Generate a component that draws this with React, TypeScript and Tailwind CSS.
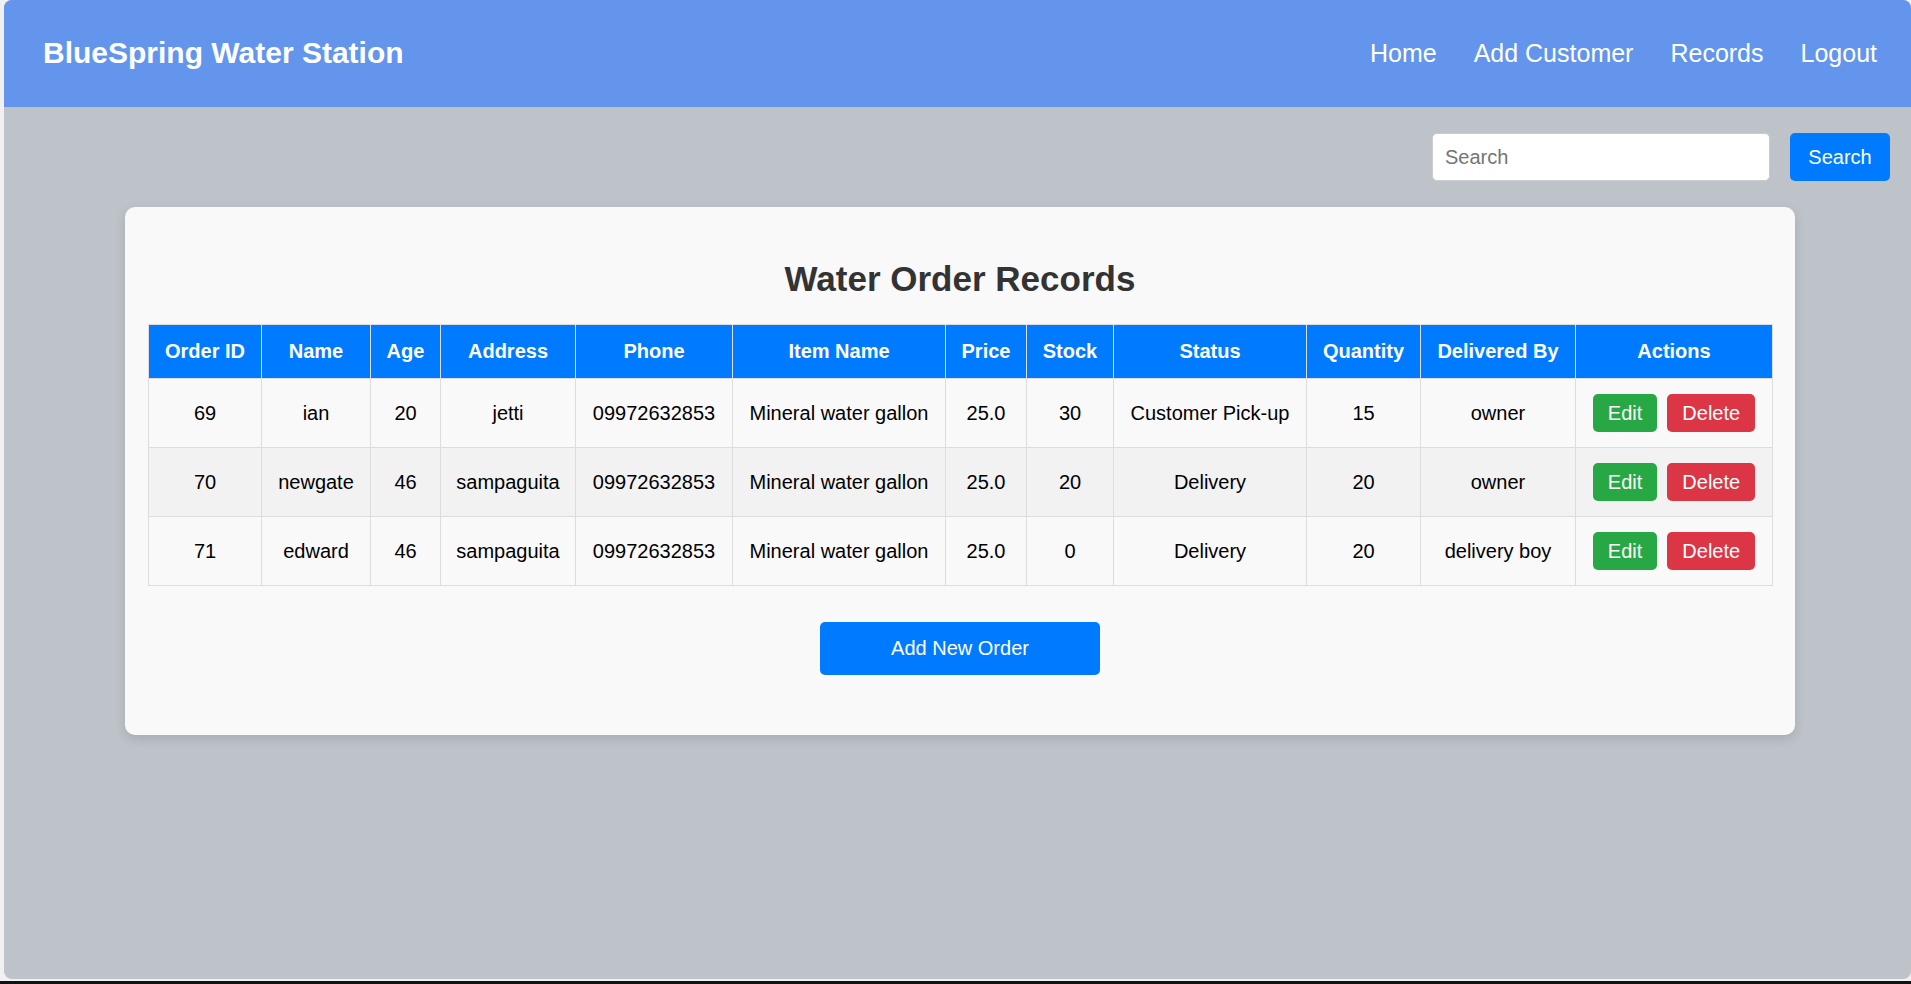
import React from "react";

type Order = {
  id: number;
  name: string;
  age: number;
  address: string;
  phone: string;
  item: string;
  price: string;
  stock: number;
  status: string;
  quantity: number;
  deliveredBy: string;
};

const orders: Order[] = [
  { id: 69, name: "ian", age: 20, address: "jetti", phone: "09972632853", item: "Mineral water gallon", price: "25.0", stock: 30, status: "Customer Pick-up", quantity: 15, deliveredBy: "owner" },
  { id: 70, name: "newgate", age: 46, address: "sampaguita", phone: "09972632853", item: "Mineral water gallon", price: "25.0", stock: 20, status: "Delivery", quantity: 20, deliveredBy: "owner" },
  { id: 71, name: "edward", age: 46, address: "sampaguita", phone: "09972632853", item: "Mineral water gallon", price: "25.0", stock: 0, status: "Delivery", quantity: 20, deliveredBy: "delivery boy" },
];

const columns = [
  { label: "Order ID", width: 113 },
  { label: "Name", width: 109 },
  { label: "Age", width: 70 },
  { label: "Address", width: 135 },
  { label: "Phone", width: 157 },
  { label: "Item Name", width: 213 },
  { label: "Price", width: 81 },
  { label: "Stock", width: 87 },
  { label: "Status", width: 193 },
  { label: "Quantity", width: 114 },
  { label: "Delivered By", width: 155 },
  { label: "Actions", width: 197 },
];

const navLinks = ["Home", "Add Customer", "Records", "Logout"];

export default function App() {
  return (
    <div className="w-full h-[984px] bg-[#f1f1f1] flex flex-col font-['Liberation_Sans',Arial,sans-serif] overflow-hidden">
      <div className="pl-[4px]">
        <div className="h-[979px] rounded-[8px] overflow-hidden bg-[#bdc3c9]">
          {/* header */}
          <header className="h-[107px] bg-[#6495ed] flex items-center justify-between pl-[39px] pr-[34px] pb-[2px]">
            <h1 className="text-white font-bold text-[30px] leading-[34px]">BlueSpring Water Station</h1>
            <nav className="flex items-center gap-[37px]">
              {navLinks.map((l) => (
                <a key={l} className="text-white text-[25px] leading-[30px]">
                  {l}
                </a>
              ))}
            </nav>
          </header>

          {/* search */}
          <div className="flex justify-end items-center gap-[20px] pt-[26px] pr-[21px]">
            <input
              type="text"
              placeholder="Search"
              className="w-[338px] h-[48px] bg-white border border-[#cccccc] rounded-[5px] pl-[12px] text-[20px] text-black placeholder:text-[#757575] outline-none"
            />
            <button className="w-[100px] h-[48px] bg-[#007bff] text-white text-[20px] rounded-[5px]">Search</button>
          </div>

          {/* card */}
          <div className="ml-[121px] mt-[26px] w-[1670px] h-[528px] bg-[#f9f9f9] rounded-[10px] shadow-[0_4px_12px_rgba(0,0,0,0.12)] px-[23px] pt-[52px]">
            <h2 className="text-center text-[#333333] font-bold text-[35px] leading-[40px]">Water Order Records</h2>
            <table className="mt-[25px] w-[1624px] table-fixed border-collapse text-[20px] leading-[23px] text-black">
              <colgroup>
                {columns.map((c) => (
                  <col key={c.label} style={{ width: c.width }} />
                ))}
              </colgroup>
              <thead>
                <tr className="bg-[#007bff]">
                  {columns.map((c) => (
                    <th key={c.label} className="border border-[#dddddd] py-[15px] px-0 text-white font-bold text-center">
                      {c.label}
                    </th>
                  ))}
                </tr>
              </thead>
              <tbody>
                {orders.map((o, i) => (
                  <tr key={o.id} className={i % 2 === 1 ? "bg-[#f2f2f2]" : "bg-[#f9f9f9]"}>
                    {[o.id, o.name, o.age, o.address, o.phone, o.item, o.price, o.stock, o.status, o.quantity, o.deliveredBy].map((v, j) => (
                      <td key={j} className="border border-[#dddddd] h-[69px] px-0 text-center whitespace-nowrap">
                        {v}
                      </td>
                    ))}
                    <td className="border border-[#dddddd] py-[15px] px-0">
                      <div className="flex justify-center gap-[10px]">
                        <button className="h-[38px] px-[15px] rounded-[5px] bg-[#28a745] text-white text-[20px]">Edit</button>
                        <button className="h-[38px] px-[15px] rounded-[5px] bg-[#dc3545] text-white text-[20px]">Delete</button>
                      </div>
                    </td>
                  </tr>
                ))}
              </tbody>
            </table>
            <div className="flex justify-center mt-[36px]">
              <button className="w-[280px] h-[53px] rounded-[5px] bg-[#007bff] text-white text-[20px] pb-[1px]">Add New Order</button>
            </div>
          </div>
        </div>
      </div>
      <div className="h-[2px]" />
      <div className="h-[3px] bg-[#111111]" />
    </div>
  );
}
